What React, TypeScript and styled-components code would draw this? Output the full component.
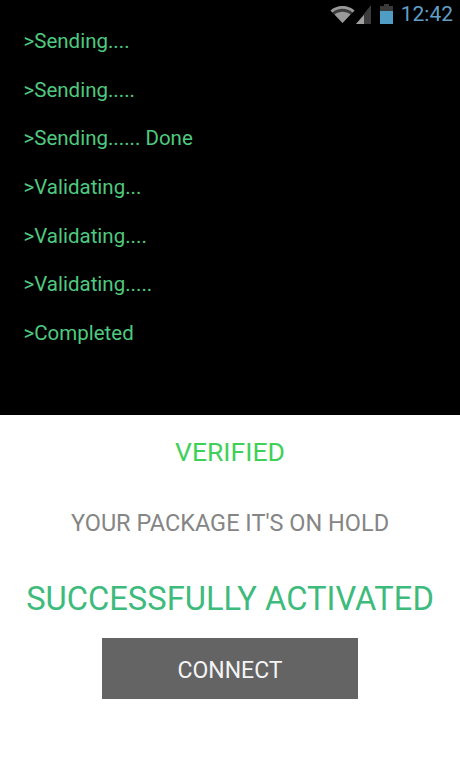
import * as React from "react";
import styled, { createGlobalStyle } from "styled-components";

const Global = createGlobalStyle`
    html, body {
        margin: 0;
        padding: 0;
        background: #ffffff;
    }
    body {
        font-family: Roboto, "Liberation Sans", sans-serif;
    }
`;

const Page = styled.div`
    width: 460px;
    height: 780px;
    display: flex;
    flex-direction: column;
    overflow: hidden;
`;

const Terminal = styled.div`
    height: 415px;
    background: #000000;
    display: flex;
    flex-direction: column;
`;

const StatusBar = styled.div`
    height: 28px;
    flex: none;
    display: flex;
    justify-content: flex-end;
    align-items: center;
    padding: 0 7px 0 0;
`;

const Clock = styled.span`
    font-size: 21px;
    color: #619fc4;
    margin-left: 8px;
    line-height: 28px;
`;

const Icon = styled.svg<{ $gauche: number }>`
    display: block;
    flex: none;
    margin-left: ${(props) => props.$gauche}px;
`;

const LogList = styled.div`
    display: flex;
    flex-direction: column;
    gap: 24.7px;
    padding: 1px 0 0 23.5px;
`;

const LogLine = styled.div`
    font-size: 20.5px;
    line-height: 24px;
    color: #4fc97f;
`;

const Panel = styled.div`
    flex: 1;
    display: flex;
    flex-direction: column;
    align-items: center;
    background: #ffffff;
`;

const Verified = styled.div`
    margin-top: 21px;
    font-size: 26.5px;
    line-height: 31px;
    color: #3fd05a;
`;

const OnHold = styled.div`
    margin-top: 42px;
    font-size: 23.5px;
    line-height: 28px;
    color: #858585;
`;

const Activated = styled.div`
    margin-top: 42px;
    font-size: 32.7px;
    line-height: 40px;
    color: #3dbb7c;
`;

const ConnectButton = styled.button`
    margin-top: 19px;
    width: 256px;
    height: 61px;
    border: 0;
    padding: 3px 0 0;
    background: #646464;
    color: #f4f4f4;
    font-family: inherit;
    font-size: 23px;
`;

const lignes = [
    ">Sending....",
    ">Sending.....",
    ">Sending...... Done",
    ">Validating...",
    ">Validating....",
    ">Validating.....",
    ">Completed",
];

export default function App() {
    return (
        <Page>
            <Global />
            <Terminal>
                <StatusBar>
                    <Icon $gauche={0} width="25" height="20" viewBox="0 0 25 20">
                        <path d="M12.5 19L0.5 6.5C7 0.5 18 0.5 24.5 6.5Z" fill="#3c3c3c" />
                        <path d="M12.5 19L4.5 10.5C9 6.8 16 6.8 20.5 10.5Z" fill="#9a9a9a" />
                        <path d="M0.5 6.5C7 0.5 18 0.5 24.5 6.5L22.6 8.5C17 3.6 8 3.6 2.4 8.5Z" fill="#9a9a9a" />
                    </Icon>
                    <Icon $gauche={1} width="16" height="20" viewBox="0 0 16 20">
                        <path d="M15 1V20H0Z" fill="#3c3c3c" />
                        <path d="M8 11V20H0Z" fill="#a0a0a0" />
                    </Icon>
                    <Icon $gauche={8} width="13" height="20" viewBox="0 0 13 20">
                        <path d="M4 0H9V2H13V20H0V2H4Z" fill="#3a3a3a" />
                        <rect x="0" y="7" width="13" height="13" fill="#4f9cc4" />
                    </Icon>
                    <Clock>12:42</Clock>
                </StatusBar>
                <LogList>
                    {lignes.map((l) => (
                        <LogLine key={l}>{l}</LogLine>
                    ))}
                </LogList>
            </Terminal>
            <Panel>
                <Verified>VERIFIED</Verified>
                <OnHold>YOUR PACKAGE IT'S ON HOLD</OnHold>
                <Activated>SUCCESSFULLY ACTIVATED</Activated>
                <ConnectButton>CONNECT</ConnectButton>
            </Panel>
        </Page>
    );
}
